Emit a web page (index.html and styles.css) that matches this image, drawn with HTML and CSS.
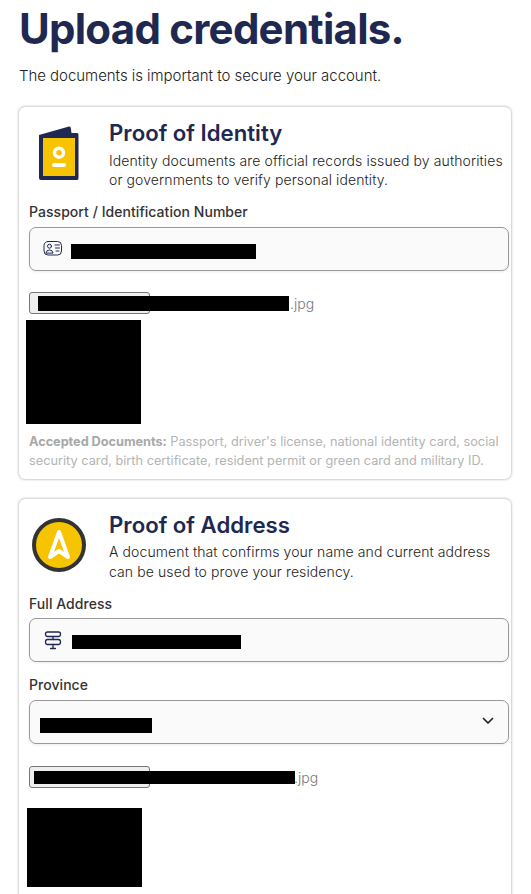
FILE: index.html
```html
<!DOCTYPE html>
<html lang="en">
<head>
<meta charset="utf-8">
<title>Upload credentials</title>
<link rel="stylesheet" href="styles.css">
</head>
<body>
<main class="page">
  <h1 class="title">Upload credentials.</h1>
  <p class="subtitle">The documents is important to secure your account.</p>

  <section class="card">
    <header class="card-head">
      <svg class="card-icon" width="42" height="56" viewBox="0 0 42 56">
        <path d="M0 9 L30 .5 Q31.500 0 31.800 2 L32.500 7 L38 7 Q39.500 7 39.500 9 V52 Q39.500 54 38 54 H2 Q0 54 0 52Z" fill="#1f2850"/>
        <rect x="4" y="12" width="32" height="38" fill="#f6c400"/>
        <circle cx="20" cy="26.700" r="4.500" fill="none" stroke="#fff" stroke-width="3.500"/>
        <rect x="13" y="37" width="14" height="4" rx="2" fill="#fff"/>
      </svg>
      <div class="card-text">
        <h2 class="card-title">Proof of Identity</h2>
        <p class="card-desc">Identity documents are official records issued by authorities or governments to verify personal identity.</p>
      </div>
    </header>
    <div class="label">Passport / Identification Number</div>
    <div class="input">
      <svg class="input-icon" width="20" height="18" viewBox="0 0 20 18" fill="none" stroke="#1f2850" stroke-width="1" stroke-linecap="round">
        <rect x="1" y="1.500" width="17.500" height="13.500" rx="4"/>
        <circle cx="6.500" cy="6.200" r="2"/>
        <path d="M3 12.700 Q3.300 10 6.500 10 Q9.700 10 10 12.700Z"/>
        <path d="M12 5h4.500M12.500 8h4M13 11h3"/>
      </svg>
      <span class="redact redact-id"></span>
    </div>
    <div class="file-row">
      <button class="file-btn" type="button">Choose File</button>
      <span class="file-name">.jpg</span>
      <span class="redact redact-file"></span>
    </div>
    <div class="redact preview"></div>
    <p class="note"><strong>Accepted Documents:</strong> Passport, driver's license, national identity card, social security card, birth certificate, resident permit or green card and military ID.</p>
  </section>

  <section class="card card-last">
    <header class="card-head">
      <svg class="card-icon card-icon-round" width="54" height="54" viewBox="0 0 54 54">
        <circle cx="27" cy="27" r="25" fill="#f6c400" stroke="#333" stroke-width="4"/>
        <path d="M27 14 L36 39 L27 33 L18 39Z" fill="none" stroke="#fff" stroke-width="4" stroke-linejoin="round"/>
      </svg>
      <div class="card-text">
        <h2 class="card-title">Proof of Address</h2>
        <p class="card-desc">A document that confirms your name and current address can be used to prove your residency.</p>
      </div>
    </header>
    <div class="label">Full Address</div>
    <div class="input input-address">
      <svg class="input-icon" width="20" height="20" viewBox="0 0 20 20" fill="none" stroke="#1f2850" stroke-width="1.300" stroke-linecap="round" stroke-linejoin="round">
        <path d="M4.500 2 H15.500 Q17.500 2 17.500 4 Q17.500 6.500 15.500 6.500 H4.500 Q2.500 6.500 2.500 4 Q2.500 2 4.500 2Z"/>
        <path d="M4.500 9.500 H15.500 Q17.500 9.500 17.500 12 Q17.500 14.500 15.500 14.500 H4.500 Q2.500 14.500 2.500 12 Q2.500 9.500 4.500 9.500Z"/>
        <path d="M10 6.500v3M10 14.500v4M7.500 18.500h5"/>
      </svg>
      <span class="redact redact-address"></span>
    </div>
    <div class="label label-next">Province</div>
    <div class="input select">
      <span class="redact redact-province"></span>
      <svg class="chevron" width="12" height="8" viewBox="0 0 12 8" fill="none" stroke="#222" stroke-width="1.700" stroke-linecap="round" stroke-linejoin="round"><path d="M1.500 1.500 L6 6 L10.500 1.500"/></svg>
    </div>
    <div class="file-row file-row-2">
      <button class="file-btn" type="button">Choose File</button>
      <span class="file-name">.jpg</span>
      <span class="redact redact-file-2"></span>
    </div>
    <div class="redact preview preview-2"></div>
  </section>
</main>
</body>
</html>
```

FILE: styles.css
```css
* { box-sizing: border-box; }
html, body {
  margin: 0;
  height: 894px;
  overflow: hidden;
  background: #fff;
}
body {
  font-family: "Inter", "Liberation Sans", sans-serif;
  color: #333;
}
.page { padding: 0 20px 0 19px; }
.title {
  margin: 5px 0 0;
  font-size: 42px;
  line-height: 48px;
  font-weight: 700;
  letter-spacing: -0.75px;
  color: #1f2850;
}
.subtitle {
  margin: 13px 0 0;
  font-size: 15px;
  line-height: 20px;
  font-weight: 300;
  letter-spacing: -0.04px;
  color: #222;
}
.card {
  margin-top: 21px;
  padding: 11px 2px 9px 10px;
  background: #fff;
  border-radius: 6px;
  box-shadow: 0 0 3px rgba(0, 0, 0, .4);
}
.card-last { margin-top: 20px; padding-bottom: 40px; }
.card-head {
  display: flex;
  align-items: center;
  min-height: 72px;
}
.card-icon { flex: none; margin: 0 28px 0 10px; }
.card-icon-round { margin: -2px 23px 0 3px; }
.card-text { min-width: 0; align-self: flex-start; }
.card-title {
  margin: 1px 0 0;
  font-size: 22.200px;
  line-height: 28px;
  font-weight: 600;
  color: #1f2850;
}
.card-desc {
  margin: 4px 0 0;
  font-size: 14px;
  line-height: 19px;
  font-weight: 300;
  letter-spacing: 0.1px;
  color: #222;
}
.card-last .card-desc { margin-top: 3px; line-height: 20px; }
.label {
  margin-top: 13px;
  font-size: 14px;
  line-height: 18px;
  font-weight: 450;
  letter-spacing: 0.05px;
  color: #333;
}
.label-next { margin-top: 14px; }
.input {
  display: flex;
  align-items: center;
  gap: 9px;
  width: 480px;
  height: 44px;
  margin-top: 6px;
  padding: 0 13px;
  background: #fafafa;
  border: 1px solid #999;
  border-radius: 7px;
  box-shadow: 0 1px 3px rgba(0, 0, 0, .08);
}
.input-address { margin-top: 5px; }
.input-icon { flex: none; }
.redact { display: block; background: #000; }
.redact-id { width: 185px; height: 15px; margin: 4px 0 0 -1px; }
.redact-address { width: 169px; height: 14px; margin-top: 3px; }
.select { justify-content: space-between; padding: 0 14px 0 10px; }
.redact-province { width: 112px; height: 15px; margin-top: 6px; }
.chevron { margin-top: -2px; }
.file-row {
  position: relative;
  display: flex;
  align-items: center;
  height: 22px;
  margin-top: 21px;
}
.file-btn {
  width: 121px;
  height: 22px;
  padding: 0;
  background: #efefef;
  border: 1px solid #767676;
  border-radius: 3px;
  font: 13px "Inter", sans-serif;
  color: #000;
}
.file-name {
  margin-left: 140px;
  font-size: 14px;
  font-weight: 300;
  color: #777;
}
.redact-file {
  position: absolute;
  left: 9px;
  top: 4px;
  width: 251px;
  height: 15px;
}
.file-row-2 { margin-top: 22px; }
.file-row-2 .file-name { margin-left: 144px; }
.redact-file-2 {
  position: absolute;
  left: 5px;
  top: 5px;
  width: 261px;
  height: 13px;
}
.preview {
  width: 115px;
  height: 104px;
  margin: 6px 0 0 -3px;
}
.preview-2 { height: 79px; margin: 20px 0 0 -2px; }
.note {
  margin: 8px 0 0;
  font-size: 12.750px;
  line-height: 19px;
  font-weight: 400;
  color: #b4b4b4;
}
.note strong { font-weight: 700; color: #a8a8a8; letter-spacing: -0.05px; }
```
